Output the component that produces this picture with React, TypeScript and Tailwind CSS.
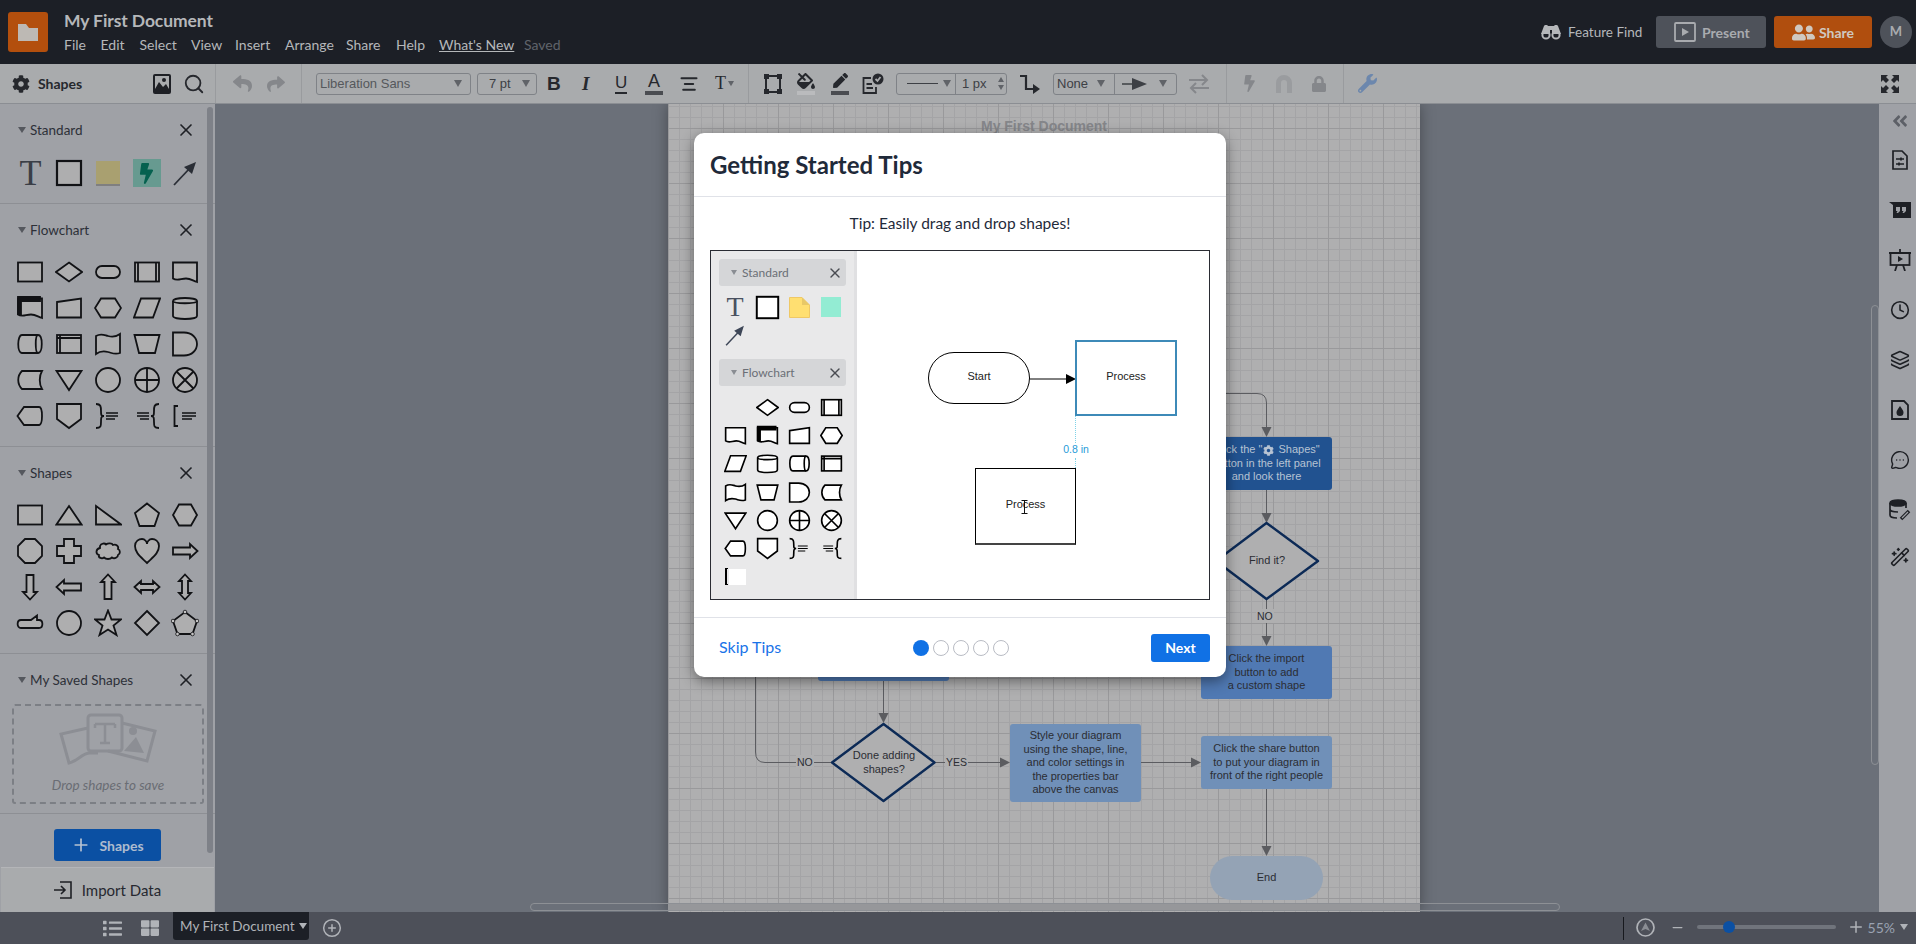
import type { ReactNode } from "react";
import { Search, AlignCenter, Clock, Layers, MessageCircleMore, WandSparkles, CirclePlus, Plus, Minus, X } from "lucide-react";
import { FaCog, FaReply, FaShare, FaFillDrip, FaPen, FaBolt, FaLock, FaWrench, FaUserFriends, FaAngleDoubleLeft, FaThLarge, FaList } from "react-icons/fa";

const shapes: Record<string, ReactNode> = {
    rect: <rect x="2" y="4.5" width="24" height="19" />,
    square: <rect x="2" y="2" width="24" height="24" />,
    diamond: <path d="M14 4.5L27 14L14 23.5L1 14Z" />,
    diamond2: <path d="M14 2L26 14L14 26L2 14Z" />,
    term: <rect x="2" y="8" width="24" height="12" rx="6" />,
    predefined: <><rect x="2" y="4.5" width="24" height="19" /><path d="M5 4.5V23.5M23 4.5V23.5" fill="none" /></>,
    document: <path d="M2 4.5H26V24C22 23 20 20.5 15 20.5S6 23.5 2 20.5Z" />,
    multi: <><path d="M2 4.5H26V24C22 23 20 20.5 15 20.5S6 23.5 2 20.5Z" /><path d="M2 3H24V7H5V20H2Z" fill="currentColor" /></>,
    manual: <path d="M2 8L26 4.5V23.5H2Z" />,
    hexagon: <path d="M7 4.5H21L27 14L21 23.5H7L1 14Z" />,
    para: <path d="M8 4.5H27L20 23.5H1Z" />,
    cylinder: <><path d="M2 7C2 3 26 3 26 7V22C26 26 2 26 2 22Z" /><path d="M2 7C2 10 26 10 26 7" fill="none" /></>,
    hcylinder: <><path d="M6 5H22C27 5 27 23 22 23H6C1 23 1 5 6 5Z" /><path d="M22 5C19 5 19 23 22 23" fill="none" /></>,
    internal: <><rect x="2" y="5" width="24" height="18" /><path d="M2 8H26M5 5V23" fill="none" /></>,
    tape: <path d="M2 6C7 3 10 5 14 6S22 7 26 4V23C21 25 18 23 14 22S6 21 2 24Z" />,
    trapezoid: <path d="M1.5 5H26.5L22 23H6Z" />,
    delay: <path d="M2 2.5H13C21 2.5 26 8 26 14S21 25.5 13 25.5H2Z" />,
    stored: <path d="M6 5H26C23 10 23 18 26 23H6C1 18 1 10 6 5Z" />,
    merge: <path d="M1.5 5H26.5L14 24Z" />,
    circle: <circle cx="14" cy="14" r="12" />,
    summing: <><circle cx="14" cy="14" r="12" /><path d="M14 2V26M2 14H26" fill="none" /></>,
    or: <><circle cx="14" cy="14" r="12" /><path d="M5.5 5.5L22.5 22.5M22.5 5.5L5.5 22.5" fill="none" /></>,
    display: <path d="M8 5H23C27 5 27 23 23 23H8L1.5 14Z" />,
    offpage: <path d="M2 2H26V17L14 26L2 17Z" />,
    braceR: <><path d="M2 2C7 2 7 5 7 9S7 14 10 14C7 14 7 16 7 20S7 26 2 26" fill="none" /><path d="M12 11H24M12 14H24M12 17H21" fill="none" strokeWidth="1.3" /></>,
    braceL: <><path d="M26 2C21 2 21 5 21 9S21 14 18 14C21 14 21 16 21 20S21 26 26 26" fill="none" /><path d="M4 11H16M4 14H16M7 17H16" fill="none" strokeWidth="1.3" /></>,
    bracket: <><path d="M7 4H3.5V24H7" fill="none" /><path d="M11 11H25M11 14H25M11 17H21" fill="none" strokeWidth="1.3" /></>,
    tri: <path d="M14 5L26.5 23.5H1.5Z" />,
    rtri: <path d="M2 5L27 23.5H2Z" />,
    pent: <path d="M14 2.5L26 12L21.5 25H6.5L2 12Z" />,
    hex2: <path d="M8 3.5H20L26 14L20 24.5H8L2 14Z" />,
    oct: <path d="M9 2H19L26 9V19L19 26H9L2 19V9Z" />,
    cross: <path d="M9 2H19V9H26V19H19V26H9V19H2V9H9Z" />,
    cloud: <path d="M6 9C7 6 11 6 12 7.5C14 6 18 6 19 8C22 7 25 9 24 12C26.5 13 26.5 17 24 18C24 21 20 22 18 20.5C16 22.5 12 22.5 10 20.5C8 22 4 21 5 18C1.5 17 1.5 12 6 11Z" />,
    heart: <path d="M14 26C8 20 2 16 2 9C2 4 6 2 9 2C12 2 14 5 14 7C14 5 16 2 19 2C22 2 26 4 26 9C26 16 20 20 14 26Z" />,
    arrowR: <path d="M2 10.5H19V7L26.5 14L19 21V17.5H2Z" />,
    arrowD: <path d="M10.5 2V19H7L14 26.5L21 19H17.5V2Z" />,
    arrowL: <path d="M26 10.5H9V7L1.5 14L9 21V17.5H26Z" />,
    arrowU: <path d="M10.5 26V9H7L14 1.5L21 9H17.5V26Z" />,
    arrowLR: <path d="M1.5 14L8 8V11H20V8L26.5 14L20 20V17H8V20Z" />,
    arrowUD: <path d="M14 1.5L20 8H17V20H20L14 26.5L8 20H11V8H8Z" />,
    callout: <path d="M5 11H15L21 6.5V11H23C27.5 11 27.5 19 23 19H5C0.5 19 0.5 11 5 11Z" />,
    star: <path d="M14 1.5L17.5 10.5H27L19.5 16.5L22.5 26L14 20.5L5.5 26L8.5 16.5L1 10.5H10.5Z" />,
    poly: <><path d="M14 3L26 12L21.5 25H6.5L2 12Z" /><g fill="#c4c4c4" strokeWidth="0.8"><circle cx="14" cy="3" r="1.8" /><circle cx="26" cy="12" r="1.8" /><circle cx="21.5" cy="25" r="1.8" /><circle cx="6.5" cy="25" r="1.8" /><circle cx="2" cy="12" r="1.8" /></g></>,
};

function Shape({ name, size = 28, fill = "#aeaeaf", color = "#111215", weight = 1.8 }: { name: string; size?: number; fill?: string; color?: string; weight?: number }) {
    return (
        <svg width={size} height={size} viewBox="0 0 28 28" fill={fill} stroke={color} strokeWidth={weight} style={{ color }} className="mx-auto">
            {shapes[name]}
        </svg>
    );
}

function Select({ className, children }: { className: string; children: ReactNode }) {
    return <div className={"h-[22px] flex items-center rounded-[3px] border border-[#7f8287] text-[#3d4045] " + className}>{children}</div>;
}

function Caret({ className = "" }: { className?: string }) {
    return <span className={"w-0 h-0 border-x-[4px] border-x-transparent border-t-[7px] border-t-[#606368] " + className}></span>;
}

function Header() {
    return (
        <div className="h-[64px] bg-[#1c1f26] flex items-start [font-family:Lato,sans-serif] text-[#b5b7ba]">
            <div className="ml-2 mt-3 w-10 h-10 rounded-[3px] bg-[#b34f0d] flex items-center justify-center">
                <svg width="20" height="20" viewBox="0 0 20 20" fill="#bdb9b4"><path d="M0 2H8L11 6H20V19H0Z" /></svg>
            </div>
            <div className="ml-[16px] pt-[11px]">
                <div className="text-[17.5px] font-bold leading-5 tracking-[-0.1px]">My First Document</div>
                <div className="mt-[4px] flex text-[14px] leading-5">
                    <span className="w-[36.5px]">File</span>
                    <span className="w-[39px]">Edit</span>
                    <span className="w-[51.5px]">Select</span>
                    <span className="w-[44px]">View</span>
                    <span className="w-[50px]">Insert</span>
                    <span className="w-[61px]">Arrange</span>
                    <span className="w-[50px]">Share</span>
                    <span className="w-[43px]">Help</span>
                    <span className="w-[85px]"><span className="underline">What's New</span></span>
                    <span className="text-[#60646b]">Saved</span>
                </div>
            </div>
            <div className="ml-auto mt-4 flex items-center h-8">
                <svg width="20" height="16" viewBox="0 0 20 16" fill="#b5b7ba"><path d="M3 2C3 0.5 7 0.5 7 2H13C13 0.5 17 0.5 17 2L20 10H11V6H9V10H0Z" /><circle cx="5" cy="11" r="3.6" fill="none" stroke="#b5b7ba" strokeWidth="2" /><circle cx="15" cy="11" r="3.6" fill="none" stroke="#b5b7ba" strokeWidth="2" /></svg>
                <span className="ml-[7px] text-[13.5px] w-[88px]">Feature Find</span>
                <div className="w-[110px] h-8 rounded-[3px] bg-[#4e525a] flex items-center pl-[18px] text-[#a9abaf] font-bold text-[14px]">
                    <svg width="22" height="20" viewBox="0 0 22 20" fill="none" stroke="#a9abaf" strokeWidth="1.8"><rect x="1" y="1" width="20" height="18" rx="1" /><path d="M8 6L15 10L8 14Z" fill="#a9abaf" stroke="none" /></svg>
                    <span className="ml-[6px]">Present</span>
                </div>
                <div className="ml-2 w-[98px] h-8 rounded-[3px] bg-[#b04e0e] flex items-center pl-[18px] text-[#cfc8c0] font-bold text-[14px]">
                    <FaUserFriends size={23} />
                    <span className="ml-1">Share</span>
                </div>
                <div className="ml-2 mr-1 w-8 h-8 rounded-full bg-[#4e525a] flex items-center justify-center text-[#a9abaf] font-bold text-[13px]">M</div>
            </div>
        </div>
    );
}

function Toolbar() {
    return (
        <div className="h-[40px] bg-[#a9abad] border-b border-[#8b8e93] flex items-center text-[#26282d]">
            <div className="w-[216px] h-full flex items-center border-r border-[#999b9e] pl-3 [font-family:Lato,sans-serif]">
                <FaCog size={18} />
                <span className="ml-2 text-[14px] font-bold">Shapes</span>
                <svg className="ml-auto" width="18" height="20" viewBox="0 0 18 20"><rect width="18" height="20" rx="2" fill="#1e2025" /><rect x="2" y="2" width="14" height="13" fill="#a9abad" /><circle cx="11" cy="6" r="2" fill="#1e2025" /><path d="M2 15L6 8L10 13L13 10L16 15Z" fill="#1e2025" /></svg>
                <Search size={22} className="ml-[12px] mr-[10px]" />
            </div>
            <div className="w-[86px] h-full flex items-center border-r border-[#999b9e] text-[#85878b]">
                <FaReply size={19} className="ml-[17px]" />
                <FaShare size={18} className="ml-[15px]" />
            </div>
            <div className="w-[447px] h-full flex items-center border-r border-[#999b9e] [font-family:'Liberation_Sans',sans-serif]">
                <Select className="ml-[14px] w-[155px] pl-[3px] pr-[8px] justify-between text-[13px] text-[#55585c]">Liberation Sans<Caret /></Select>
                <Select className="ml-[6px] w-[60px] pl-[11px] pr-[6px] justify-between text-[13px]">7 pt<Caret /></Select>
                <span className="ml-[10px] w-[12px] text-[19px] font-bold leading-none">B</span>
                <span className="ml-[23px] w-[12px] text-[19px] italic font-bold leading-none [font-family:'Liberation_Serif',serif]">I</span>
                <span className="ml-[21px] w-[12px] text-[17px] leading-[18px] border-b-2 border-[#26282d]">U</span>
                <div className="ml-[18px] w-[18px] flex flex-col items-center">
                    <span className="text-[18px] leading-[19px]">A</span>
                    <span className="w-[18px] h-[4px] bg-[#4a4c51]"></span>
                </div>
                <AlignCenter size={20} strokeWidth={2.4} className="ml-[16px]" />
                <span className="ml-[16px] text-[18px] [font-family:'Liberation_Serif',serif]">T</span>
                <Caret className="ml-[1px] scale-75" />
            </div>
            <div className="w-[478px] h-full flex items-center border-r border-[#999b9e]">
                <svg className="ml-[15px]" width="18" height="20" viewBox="0 0 18 20" fill="none" stroke="#26282d" strokeWidth="2"><rect x="2" y="2" width="14" height="16" /><g fill="#26282d"><rect x="0" y="0" width="4" height="4" /><rect x="14" y="0" width="4" height="4" /><rect x="0" y="16" width="4" height="4" /><rect x="14" y="16" width="4" height="4" /></g></svg>
                <div className="ml-[15px] w-[18px] flex flex-col items-center">
                    <FaFillDrip size={18} />
                    <span className="mt-[1px] w-[18px] h-[4px] bg-[#babbbd]"></span>
                </div>
                <div className="ml-[16px] w-[18px] flex flex-col items-center">
                    <FaPen size={15} className="mb-[2px]" />
                    <span className="mt-[1px] w-[18px] h-[4px] bg-[#4a4c51]"></span>
                </div>
                <svg className="ml-[13px]" width="22" height="22" viewBox="0 0 22 22" fill="none" stroke="#26282d" strokeWidth="1.8"><path d="M9 5H1.5V20H14V14" /><path d="M4.5 11H10M4.5 15H11" /><circle cx="16" cy="6" r="5.5" fill="#26282d" stroke="none" /><path d="M13.5 6L15.5 8L18.5 4" stroke="#a9abad" /></svg>
                <Select className="ml-[12px] w-[111px] font-[400] [font-family:'Liberation_Sans',sans-serif] text-[13px]">
                    <div className="w-[59px] h-full flex items-center pl-[10px] border-r border-[#7f8287]">
                        <span className="w-[31px] h-[1px] bg-[#3d4045]"></span>
                        <Caret className="ml-[5px]" />
                    </div>
                    <span className="ml-[6px]">1 px</span>
                    <div className="ml-[11px] flex flex-col gap-[3px]"><span className="w-0 h-0 border-x-[3px] border-x-transparent border-b-[5px] border-b-[#606368]"></span><span className="w-0 h-0 border-x-[3px] border-x-transparent border-t-[5px] border-t-[#606368]"></span></div>
                </Select>
                <svg className="ml-[13px]" width="20" height="20" viewBox="0 0 20 20" fill="none" stroke="#26282d" strokeWidth="2.2"><path d="M0 2H6V15H14" /><path d="M13 10L20 15L13 20Z" fill="#26282d" stroke="none" /></svg>
                <Select className="ml-[13px] w-[124px] [font-family:'Liberation_Sans',sans-serif] text-[13px]">
                    <div className="w-[61px] h-full flex items-center pl-[3px] border-r border-[#7f8287]">None<Caret className="ml-[9px]" /></div>
                    <svg className="ml-[7px]" width="25" height="12" viewBox="0 0 25 12"><path d="M0 6H12" stroke="#3d4045" strokeWidth="1.5" /><path d="M10 0L25 6L10 12Z" fill="#3d4045" /></svg>
                    <Caret className="ml-[12px]" />
                </Select>
                <svg className="ml-[12px]" width="20" height="20" viewBox="0 0 20 20" fill="none" stroke="#85878b" strokeWidth="2"><path d="M0 6H17M13 1L18 6L13 11" /><path d="M20 14H3M7 9L2 14L7 19" /></svg>
            </div>
            <div className="w-[117px] h-full flex items-center border-r border-[#999b9e] text-[#85878b]">
                <FaBolt size={17} className="ml-[14px]" />
                <svg className="ml-[18px]" width="16" height="18" viewBox="0 0 16 18" fill="#9a9c9f"><path d="M0 18V8A8 8 0 0 1 16 8V18H11V8A3 3 0 0 0 5 8V18Z" /></svg>
                <FaLock size={16} className="ml-[19px]" />
            </div>
            <FaWrench size={19} className="ml-[14px] text-[#6c87ad]" />
            <svg className="ml-auto mr-[17px]" width="18" height="18" viewBox="0 0 18 18" fill="#26282d"><path d="M0 0H7L5 2L8 5L5 8L2 5L0 7Z" /><path d="M18 0H11L13 2L10 5L13 8L16 5L18 7Z" /><path d="M0 18H7L5 16L8 13L5 10L2 13L0 11Z" /><path d="M18 18H11L13 16L10 13L13 10L16 13L18 11Z" /></svg>
        </div>
    );
}

function SectionHead({ title }: { title: string }) {
    return (
        <div className="pt-[17px] h-[35px] flex items-center pl-[18px] pr-[19px] text-[13.5px] text-[#2d3038] box-border">
            <span className="w-0 h-0 border-x-[4px] border-x-transparent border-t-[6px] border-t-[#55585e]"></span>
            <span className="ml-[4px]">{title}</span>
            <X size={20} strokeWidth={2} className="ml-auto text-[#1e2025]" />
        </div>
    );
}

function ShapeGrid({ names }: { names: string[] }) {
    return (
        <div className="mt-[15px] pl-[11px] grid grid-cols-[repeat(5,38.75px)] auto-rows-[36px] items-center">
            {names.map((n) => (
                <Shape key={n} name={n} />
            ))}
        </div>
    );
}

function LeftPanel() {
    return (
        <div className="relative w-[215px] bg-[#9fa1a6] flex flex-col [font-family:Lato,sans-serif]">
            <div className="absolute left-[207px] top-[3px] w-[6px] h-[746px] rounded-full bg-[#7e8188]"></div>
            <div className="h-[100px] border-b border-[#8d8f94]">
                <SectionHead title="Standard" />
                <div className="mt-[20px] pl-[11px] grid grid-cols-[repeat(5,38.75px)] items-center">
                    <span className="text-center text-[36px] leading-[28px] text-[#3a3e46] [font-family:'Liberation_Serif',serif]">T</span>
                    <Shape name="square" weight={2.2} />
                    <div className="mx-auto w-[24px] h-[25px] bg-[#a9a070] border-b-2 border-[#7f7f80]"></div>
                    <div className="mx-auto w-[28px] h-[28px] bg-[#679a90] flex items-center justify-center"><FaBolt size={21} className="text-[#05614f]" /></div>
                    <svg className="mx-auto" width="24" height="26" viewBox="0 0 24 26" fill="#2a2e36" stroke="#2a2e36" strokeWidth="1.8"><path d="M1 25L17 8" /><path d="M11 7L23 2L19 14Z" stroke="none" /></svg>
                </div>
            </div>
            <div className="h-[243px] border-b border-[#8d8f94]">
                <SectionHead title="Flowchart" />
                <ShapeGrid names={["rect", "diamond", "term", "predefined", "document", "multi", "manual", "hexagon", "para", "cylinder", "hcylinder", "internal", "tape", "trapezoid", "delay", "stored", "merge", "circle", "summing", "or", "display", "offpage", "braceR", "braceL", "bracket"]} />
            </div>
            <div className="h-[207px] border-b border-[#8d8f94]">
                <SectionHead title="Shapes" />
                <ShapeGrid names={["rect", "tri", "rtri", "pent", "hex2", "oct", "cross", "cloud", "heart", "arrowR", "arrowD", "arrowL", "arrowU", "arrowLR", "arrowUD", "callout", "circle", "star", "diamond2", "poly"]} />
            </div>
            <div className="h-[160px] border-b border-[#8d8f94]">
                <SectionHead title="My Saved Shapes" />
                <div className="mt-[15px] ml-[12px] w-[192px] h-[100px] border-2 border-dashed border-[#7c7f85] rounded-[3px] flex flex-col items-center">
                    <svg className="mt-[7px]" width="100" height="52" viewBox="0 0 100 52" fill="none" stroke="#8c8e94" strokeWidth="3">
                        <path d="M30 15L3 21L11 50C20 48 24 40 32 40H40" />
                        <path d="M64 10L97 18L89 48L50 38" />
                        <rect x="30" y="2" width="34" height="36" rx="3" />
                        <path d="M66 38L78 24L86 40Z" fill="#8c8e94" stroke="none" />
                        <circle cx="75" cy="18" r="4" fill="#8c8e94" stroke="none" />
                        <path d="M37 11H57M47 11V30M42 30H52M37 11V15M57 11V15" strokeWidth="2.5" />
                    </svg>
                    <span className="mt-[10px] text-[13.5px] italic text-[#6a6d74]">Drop shapes to save</span>
                </div>
            </div>
            <div className="mt-[15px] ml-[54px] w-[107px] h-[32px] rounded-[3px] bg-[#0b50a3] flex items-center justify-center gap-[8px] text-[#aebccf] font-bold text-[14px]">
                <Plus size={20} strokeWidth={2} className="text-[#b7c2d2]" />
                Shapes
            </div>
            <div className="mt-[6px] ml-[1px] w-[213px] h-[45px] bg-[#a9abad] flex items-center justify-center gap-[9px] text-[15px] text-[#262830] border-t border-[#b4b5b8]">
                <svg width="19" height="18" viewBox="0 0 19 18" fill="none" stroke="#1e2025" strokeWidth="1.6"><path d="M6 1H17V17H6" /><path d="M0 9H11M7 5L11 9L7 13" /></svg>
                Import Data
            </div>
        </div>
    );
}

function Node({ className, children }: { className: string; children?: ReactNode }) {
    return <div className={"absolute rounded-[3px] flex items-center justify-center text-center text-[11px] leading-[13.5px] whitespace-nowrap " + className}>{children}</div>;
}

function Diagram() {
    return (
        <div className="relative ml-[453px] w-[752px] h-full bg-[#afafb0] shadow-[0_0_14px_rgba(0,0,0,0.35)] overflow-hidden [font-family:'Liberation_Sans',sans-serif] text-[#2b2d33] bg-[linear-gradient(#99999b_1px,transparent_1px),linear-gradient(90deg,#99999b_1px,transparent_1px),linear-gradient(#a4a4a6_1px,transparent_1px),linear-gradient(90deg,#a4a4a6_1px,transparent_1px)] [background-size:55px_55px,55px_55px,11px_11px,11px_11px] [background-position:0_24px,0_0,0_2px,0_0]">
            <div className="absolute left-[100px] right-0 top-[12px] pr-[100px] text-center text-[14px] font-bold text-[#85868a]">My First Document</div>

            <svg className="absolute inset-0" width="752" height="808" viewBox="668 104 752 808" fill="none" stroke="#5b5c60" strokeWidth="1">
                <path d="M1200 393.5H1257Q1266.5 393.5 1266.5 403V430" />
                <path d="M1266.5 490V515M1266.5 600V638M883.5 681V716" />
                <path d="M755.5 670V752Q755.5 762.5 765 762.5H832M935 762.5H1002M1141 762.5H1192M1266.5 789V848" />
                <g fill="#5b5c60" stroke="none">
                    <path d="M1261.5 427L1271.5 427L1266.5 437Z" />
                    <path d="M1261.5 513L1271.5 513L1266.5 523Z" />
                    <path d="M1261.5 636L1271.5 636L1266.5 646Z" />
                    <path d="M878.5 713L888.5 713L883.5 723Z" />
                    <path d="M1000 757.5L1010 762.5L1000 767.5Z" />
                    <path d="M1191 757.5L1201 762.5L1191 767.5Z" />
                    <path d="M1261.5 846L1271.5 846L1266.5 856Z" />
                </g>
                <g fill="#afafb0" stroke="#0c2a56" strokeWidth="2.4" strokeLinejoin="round">
                    <path d="M1266.5 523L1318 561L1266.5 599L1216 561Z" />
                    <path d="M883.5 724L934.5 762.5L883.5 801L832 762.5Z" />
                </g>
            </svg>

            <Node className="left-[150px] top-[524px] w-[131px] h-[53px] bg-[#4f79b3]" />
            <Node className="left-[533px] top-[333px] w-[131px] h-[53px] bg-[#215290] text-[#b7c3d3]">
                <span>Click the "<FaCog size={11} className="inline mx-[1px]" /> Shapes"<br />button in the left panel<br />and look there</span>
            </Node>
            <Node className="left-[533px] top-[542px] w-[131px] h-[53px] bg-[#5079b3]"><span>Click the import<br />button to add<br />a custom shape</span></Node>
            <Node className="left-[342px] top-[620px] w-[131px] h-[78px] bg-[#7090b8]"><span>Style your diagram<br />using the shape, line,<br />and color settings in<br />the properties bar<br />above the canvas</span></Node>
            <Node className="left-[533px] top-[632px] w-[131px] h-[53px] bg-[#7090b8]"><span>Click the share button<br />to put your diagram in<br />front of the right people</span></Node>
            <Node className="left-[542px] top-[752px] w-[113px] h-[44px] !rounded-full bg-[#94a3b5]">End</Node>
            <Node className="left-[569px] top-[447px] w-[60px] h-[20px]">Find it?</Node>
            <Node className="left-[176px] top-[645px] w-[80px] h-[27px]"><span>Done adding<br />shapes?</span></Node>
            <span className="absolute left-[588px] top-[505px] px-[1px] bg-[#afafb0] text-[10.5px] leading-[14px]">NO</span>
            <span className="absolute left-[128px] top-[651px] px-[1px] bg-[#afafb0] text-[10.5px] leading-[14px]">NO</span>
            <span className="absolute left-[277px] top-[651px] px-[1px] bg-[#afafb0] text-[10.5px] leading-[14px]">YES</span>

            <div className="absolute left-0 right-0 bottom-[1px] h-[7px] bg-[#96979a]"></div>
        </div>
    );
}

function RightPanel() {
    const cls = "h-[50px] flex items-center justify-center text-[#1e2025]";
    return (
        <div className="w-[37px] pl-[5px] bg-[#9fa1a6] flex flex-col">
            <div className="h-[31px] pt-[3px] flex items-center justify-center text-[#5d6067]"><FaAngleDoubleLeft size={18} /></div>
            <div className="h-[50px] flex items-center justify-center">
                <svg width="16" height="20" viewBox="0 0 16 20" fill="none" stroke="#1e2025" strokeWidth="1.7"><path d="M1 1H10L15 6V19H1Z" /><path d="M4 9H12M4 14H12" strokeWidth="1.3" /><path d="M9 7.5V10.5M7 12.5V15.5" /></svg>
            </div>
            <div className="h-[50px] flex items-center justify-center">
                <svg width="22" height="16" viewBox="0 0 22 16"><path d="M0 0H22V16H4V3Z" fill="#1e2025" /><path d="M7 5H11V9L9 11H7.5L8.5 9H7ZM13 5H17V9L15 11H13.5L14.5 9H13Z" fill="#9fa1a6" /></svg>
            </div>
            <div className="h-[50px] flex items-center justify-center">
                <svg width="22" height="22" viewBox="0 0 22 22" fill="none" stroke="#1e2025" strokeWidth="1.8"><path d="M0 4H22" strokeWidth="2" /><rect x="1.5" y="4" width="19" height="12" /><path d="M11 0V4M8 16L6 22M14 16L16 22" /><path d="M9 7L14 10L9 13Z" fill="#1e2025" stroke="none" /></svg>
            </div>
            <div className={cls}><Clock size={20} strokeWidth={1.9} /></div>
            <div className={cls}><Layers size={20} strokeWidth={1.9} /></div>
            <div className="h-[50px] flex items-center justify-center">
                <svg width="18" height="20" viewBox="0 0 18 20" fill="none" stroke="#1e2025" strokeWidth="1.8"><path d="M1 1H13L17 5V19H1Z" /><path d="M9 6C11 9 12.5 10.5 12.5 12.5A3.5 3.5 0 0 1 5.5 12.5C5.5 10.5 7 9 9 6Z" fill="#1e2025" stroke="none" /></svg>
            </div>
            <div className={cls}><MessageCircleMore size={20} strokeWidth={1.7} /></div>
            <div className="h-[50px] flex items-center justify-center">
                <svg width="22" height="22" viewBox="0 0 22 22" fill="none" stroke="#1e2025" strokeWidth="1.7"><ellipse cx="9" cy="4" rx="8" ry="3" fill="#1e2025" /><path d="M1 4V16C1 18 4 19 8 19M17 4V9M1 10C1 12 5 13 9 13" /><path d="M12 20L20 12" strokeWidth="3.5" stroke="#1e2025" /><path d="M13 19L19 13" strokeWidth="1.3" stroke="#9fa1a6" /></svg>
            </div>
            <div className="h-[44px] flex items-center justify-center text-[#1e2025]"><WandSparkles size={20} strokeWidth={2} /></div>
        </div>
    );
}

function BottomBar() {
    return (
        <div className="h-[32px] bg-[#4d5059] flex items-start [font-family:Lato,sans-serif] text-[#b0b3b8]">
            <FaList size={19} className="ml-[103px] mt-[7px]" />
            <FaThLarge size={18} className="ml-[19px] mt-[7px]" />
            <div className="ml-[14px] w-[136px] h-[28px] rounded-b-[3px] bg-[#1c1f26] flex items-center pl-[7px] text-[13.5px] whitespace-nowrap">
                My First Document
                <span className="ml-[4px] w-0 h-0 border-x-[4px] border-x-transparent border-t-[6px] border-t-[#b0b3b8]"></span>
            </div>
            <CirclePlus size={20} strokeWidth={1.8} className="ml-[13px] mt-[6px]" />
            <div className="ml-auto mt-[5px] w-[1px] h-[23px] bg-[#17191e]"></div>
            <svg className="ml-[12px] mt-[6px]" width="19" height="19" viewBox="0 0 19 19" fill="none" stroke="#b0b3b8" strokeWidth="1.7"><circle cx="9.5" cy="9.5" r="8.5" /><path d="M9.5 4.5L14 13L9.5 11L5 13Z" fill="#8a8d93" stroke="none" /></svg>
            <Minus size={15} strokeWidth={2} className="ml-[15px] mt-[8px]" />
            <div className="relative ml-[12px] mt-[13px] w-[139px] h-[4px] rounded-full bg-[#70747c]">
                <span className="absolute left-[26px] top-[-4px] w-3 h-3 rounded-full bg-[#0b50a3]"></span>
            </div>
            <Plus size={18} strokeWidth={2} className="ml-[11px] mt-[6px]" />
            <span className="ml-[3px] mt-[5px] text-[14px] text-[#9aa3b2]">55%</span>
            <span className="ml-[5px] mt-[12px] w-0 h-0 border-x-[4px] border-x-transparent border-t-[6px] border-t-[#b0b3b8]"></span>
            <span className="w-[8px]"></span>
        </div>
    );
}

function TipsModal() {
    const first = ["", "diamond", "term", "predefined", "document", "multi", "manual", "hexagon", "para", "cylinder", "hcylinder", "internal", "tape", "trapezoid", "delay", "stored", "merge", "circle", "summing", "or", "display", "offpage", "braceR", "braceL"];
    return (
        <div className="absolute left-[694px] top-[133px] w-[532px] h-[544px] rounded-[10px] bg-white shadow-[0_4px_14px_rgba(0,0,0,0.45)] flex flex-col [font-family:Lato,sans-serif] text-[#1f2a3a]">
            <div className="h-[64px] border-b border-[#e0e2e8] pl-[16px] flex items-center text-[24px] font-bold">Getting Started Tips</div>
            <div className="h-[53px] flex items-center justify-center text-[15.5px] pt-[1px]">Tip: Easily drag and drop shapes!</div>
            <div className="mx-[16px] w-[500px] h-[350px] border border-[#2a2c33] flex">
                <div className="w-[146px] h-full bg-[#e9e9ea] border-r-[3px] border-[#e0e0e2] pt-[8px] text-[12px] text-[#6b6f76]">
                    <div className="mx-[8px] h-[27px] rounded-[3px] bg-[#d5d6d8] flex items-center pl-[12px] pr-[3px]">
                        <span className="w-0 h-0 border-x-[3.5px] border-x-transparent border-t-[5px] border-t-[#8a8d93]"></span>
                        <span className="ml-[5px]">Standard</span>
                        <X size={16} className="ml-auto text-[#4a4c52]" />
                    </div>
                    <div className="mt-[7px] mx-[8px] grid grid-cols-[repeat(4,32px)] auto-rows-[28px] items-center">
                        <span className="text-center text-[28px] leading-[24px] text-[#4a5160] [font-family:'Liberation_Serif',serif]">T</span>
                        <Shape name="square" size={25} fill="#ffffff" color="#000000" weight={2.2} />
                        <svg className="mx-auto" width="21" height="21" viewBox="0 0 21 21"><path d="M0.5 0.5H13L20.5 8V20.5H0.5Z" fill="#ffdf71" stroke="#efc866" /><path d="M13 0.5V8H20.5Z" fill="#e8c867" /></svg>
                        <div className="mx-auto w-[20px] h-[20px] bg-[#93ecd3]"></div>
                        <svg className="mx-auto" width="20" height="21" viewBox="0 0 24 26" fill="#3d4657" stroke="#3d4657" strokeWidth="1.8"><path d="M1 25L17 8" /><path d="M11 7L23 1L19 14Z" stroke="none" /></svg>
                    </div>
                    <div className="mt-[10px] mx-[8px] h-[27px] rounded-[3px] bg-[#d5d6d8] flex items-center pl-[12px] pr-[3px]">
                        <span className="w-0 h-0 border-x-[3.5px] border-x-transparent border-t-[5px] border-t-[#8a8d93]"></span>
                        <span className="ml-[5px]">Flowchart</span>
                        <X size={16} className="ml-auto text-[#4a4c52]" />
                    </div>
                    <div className="mt-[7px] mx-[8px] grid grid-cols-[repeat(4,32px)] auto-rows-[28.3px] items-center">
                        {first.map((n, i) => n ? <Shape key={n} name={n} size={23} fill="#ffffff" color="#000000" weight={2} /> : <span key={i}></span>)}
                        <div className="flex items-center pl-[6px]">
                            <span className="w-[3px] h-[17px] border-l-2 border-y border-black"></span>
                            <span className="ml-[1px] w-[17px] h-[16px] bg-white"></span>
                        </div>
                    </div>
                </div>
                <div className="relative flex-1 [font-family:'Liberation_Sans',sans-serif] text-[11px] text-[#222222]">
                    <div className="absolute left-[71px] top-[101px] w-[102px] h-[52px] rounded-full border border-black flex items-center justify-center pb-[3px]">Start</div>
                    <svg className="absolute left-[173px] top-[122px]" width="46" height="12" viewBox="0 0 46 12"><path d="M0 6H36" stroke="#000000" strokeWidth="1" /><path d="M36 1L46 6L36 11Z" fill="#000000" /></svg>
                    <div className="absolute left-[218px] top-[89px] w-[102px] h-[76px] border-2 border-[#3d8ab8] flex items-center justify-center pb-[4px]">Process</div>
                    <div className="absolute left-[218px] top-[165px] h-[27px] border-l border-dotted border-[#7fd3e8]"></div>
                    <span className="absolute left-[201px] top-[191px] w-[36px] text-center text-[10.5px] leading-[14px] text-[#1f9bd8]">0.8 in</span>
                    <div className="absolute left-[218px] top-[207px] h-[10px] border-l border-dotted border-[#7fd3e8]"></div>
                    <div className="absolute left-[118px] top-[217px] w-[101px] h-[77px] border border-black border-b-2 border-b-[#444444] flex items-center justify-center pb-[3px]">Process</div>
                    <svg className="absolute left-[164px] top-[249px]" width="7" height="14" viewBox="0 0 7 14" fill="none" stroke="#111111" strokeWidth="1"><path d="M0.5 0.5H6.5M3.5 0.5V13.5M0.5 13.5H6.5" /></svg>
                </div>
            </div>
            <div className="mt-[17px] h-[60px] border-t border-[#e0e2e8] flex items-center pl-[25px] pr-[16px]">
                <span className="w-[194px] text-[16px] text-[#1a73e8] pb-[1px]">Skip Tips</span>
                <div className="flex gap-[4px]">
                    <span className="w-4 h-4 rounded-full bg-[#1071e5]"></span>
                    <span className="w-4 h-4 rounded-full border border-[#b9bcc4]"></span>
                    <span className="w-4 h-4 rounded-full border border-[#b9bcc4]"></span>
                    <span className="w-4 h-4 rounded-full border border-[#b9bcc4]"></span>
                    <span className="w-4 h-4 rounded-full border border-[#b9bcc4]"></span>
                </div>
                <div className="ml-auto w-[59px] h-[28px] rounded-[3px] bg-[#1071e5] flex items-center justify-center text-white font-bold text-[14px]">Next</div>
            </div>
        </div>
    );
}

export default function App() {
    return (
        <div className="relative w-full h-screen overflow-hidden flex flex-col bg-[#6b7079]">
            <Header />
            <Toolbar />
            <div className="flex-1 min-h-0 flex">
                <LeftPanel />
                <div className="relative flex-1 min-w-0 overflow-hidden bg-[#6b7079]">
                    <Diagram />
                    <div className="absolute left-[315px] bottom-[1px] w-[1030px] h-[8px] rounded-full border border-[#8d9095]"></div>
                    <div className="absolute right-0 top-[201px] w-[8px] h-[460px] rounded-full border border-[#8d9095]"></div>
                </div>
                <RightPanel />
            </div>
            <BottomBar />
            <TipsModal />
        </div>
    );
}
